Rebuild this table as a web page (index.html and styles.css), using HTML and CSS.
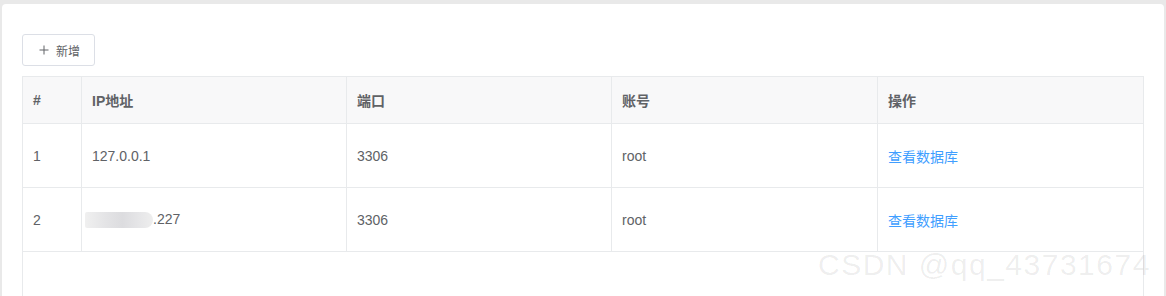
FILE: index.html
```html
<!DOCTYPE html>
<html lang="zh-CN">
<head>
<meta charset="utf-8">
<title>数据库连接</title>
<link rel="stylesheet" href="styles.css">
</head>
<body>
<div class="card">
  <button class="btn" type="button">
    <svg class="btn-icon" width="12" height="12" viewBox="0 0 12 12" aria-hidden="true">
      <path d="M6 1.5V10.5M1.5 6H10.5" stroke="#606266" stroke-width="1" fill="none"/>
    </svg>
    <span>新增</span>
  </button>
  <div class="table-wrap">
    <table class="table">
      <colgroup>
        <col class="c1"><col class="c2"><col class="c3"><col class="c4"><col class="c5">
      </colgroup>
      <thead>
        <tr><th>#</th><th>IP地址</th><th>端口</th><th>账号</th><th class="last">操作</th></tr>
      </thead>
      <tbody>
        <tr><td>1</td><td>127.0.0.1</td><td>3306</td><td>root</td><td class="last"><a class="link">查看数据库</a></td></tr>
        <tr><td>2</td><td><span class="blur"></span>.227</td><td>3306</td><td>root</td><td class="last"><a class="link">查看数据库</a></td></tr>
      </tbody>
    </table>
  </div>
  <div class="watermark">CSDN @qq_43731674</div>
</div>
</body>
</html>
```
FILE: styles.css
```css
html, body {
  margin: 0;
  padding: 0;
  background: #e9e9e9;
  overflow: hidden;
}
body {
  font-family: "Liberation Sans", "Noto Sans CJK SC", sans-serif;
  font-size: 14px;
  color: #606266;
  height: 296px;
}
.card {
  position: relative;
  margin: 4px 2px 0 2px;
  background: #fff;
  border-radius: 4px 4px 0 0;
  padding: 30px 20px 0 20px;
  height: 292px;
  box-sizing: border-box;
  overflow: hidden;
}
.btn {
  display: flex;
  align-items: center;
  box-sizing: border-box;
  width: 73px;
  height: 32px;
  padding: 0 0 0 15px;
  margin: 0 0 10px 0;
  background: #fff;
  border: 1px solid #dcdfe6;
  border-radius: 3px;
  font-family: "Liberation Sans", "Noto Sans CJK SC", sans-serif;
  font-size: 12px;
  color: #606266;
}
.btn-icon {
  margin-right: 6px;
}
.table-wrap {
  width: 1122px;
  height: 260px;
  box-sizing: border-box;
  border: 1px solid #e8eaec;
  border-bottom: none;
}
.table {
  border-collapse: separate;
  border-spacing: 0;
  table-layout: fixed;
  width: 1120px;
}
.c1 { width: 59px; }
.c2 { width: 265px; }
.c3 { width: 265px; }
.c4 { width: 266px; }
.c5 { width: 265px; }
.table th, .table td {
  box-sizing: border-box;
  padding: 0 10px;
  text-align: left;
  border-right: 1px solid #e8eaec;
  border-bottom: 1px solid #e8eaec;
  white-space: nowrap;
}
.table th.last, .table td.last {
  border-right: none;
}
.table th {
  height: 47px;
  background: #f8f8f9;
  font-weight: bold;
  color: #606266;
}
.table td {
  height: 64px;
}
.link {
  color: #409eff;
  cursor: pointer;
}
.blur {
  display: inline-block;
  vertical-align: middle;
  width: 68px;
  height: 16px;
  margin-left: -7px;
  background: linear-gradient(90deg, #f0f0f0 0%, #e4e4e6 30%, #dcdcdf 55%, #e6e6e8 80%, #eeeeee 100%);
  border-radius: 2px 8px 8px 2px;
}
.watermark {
  position: absolute;
  left: 816px;
  top: 244px;
  font-family: "Liberation Sans", sans-serif;
  font-size: 30px;
  letter-spacing: 1.5px;
  color: rgba(0, 0, 0, 0.075);
  white-space: nowrap;
  pointer-events: none;
}
```
